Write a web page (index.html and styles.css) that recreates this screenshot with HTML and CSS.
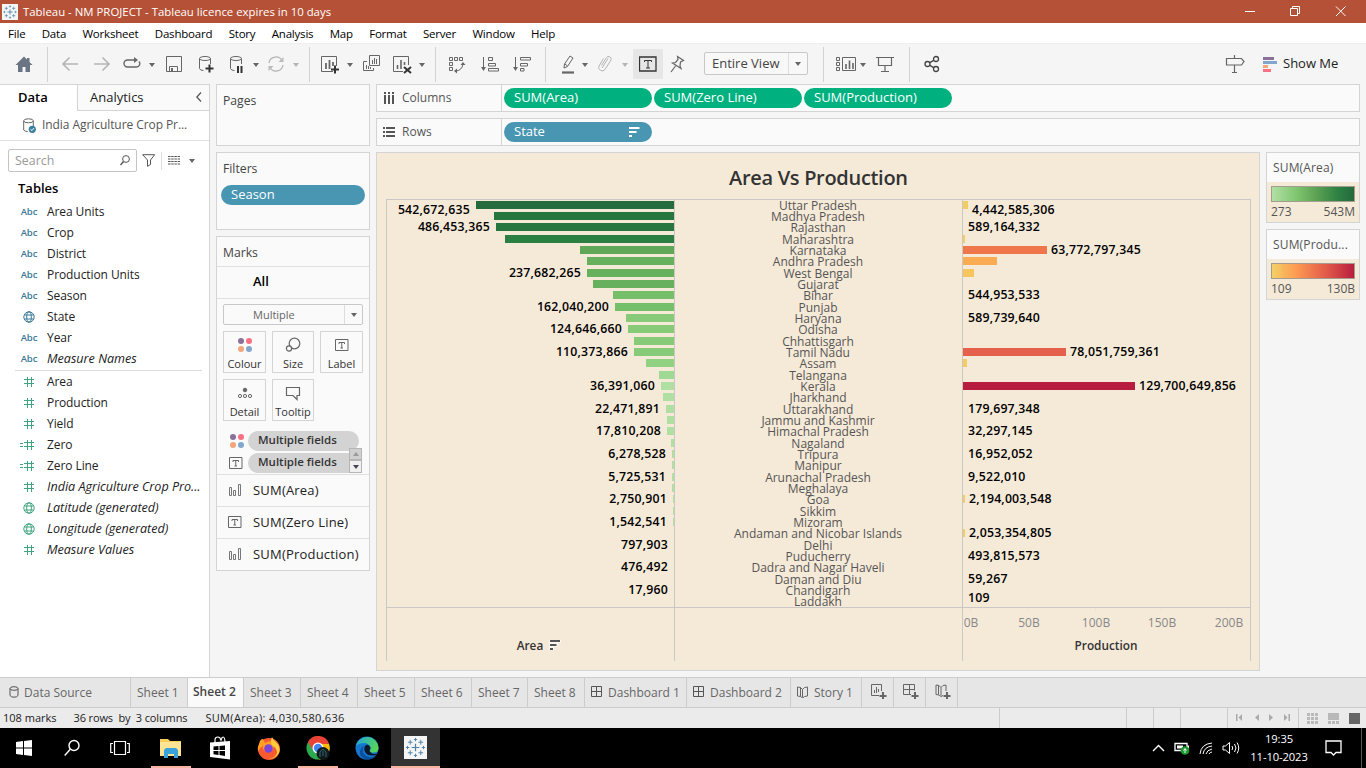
FILE: index.html
```html
<!DOCTYPE html>
<html lang="en">
<head>
<meta charset="utf-8">
<title>Tableau - NM PROJECT</title>
<link rel="stylesheet" href="styles.css">
</head>
<body>
<svg class="defs" width="0" height="0">
  <defs>
    <symbol id="hash" viewBox="0 0 16 13"><path d="M3 4.500h10M3 8.500h10M6.500 2v10M10.500 2v10" fill="none" stroke="#3fa47f"/></symbol>
    <symbol id="eqhash" viewBox="0 0 18 13"><path d="M4 4.500h10M4 8.500h10M7.500 2v10M11.500 2v10M0 5.500h3M0 8.500h3" fill="none" stroke="#3fa47f"/></symbol>
    <symbol id="globe" viewBox="0 0 12 12"><g fill="none" stroke="currentColor"><circle cx="6" cy="6" r="5.200"/><ellipse cx="6" cy="6" rx="2.300" ry="5.200"/><path d="M1.500 4h9M1.500 8h9"/></g></symbol>
    <symbol id="dots" viewBox="0 0 16 16"><circle cx="4" cy="4" r="3" fill="#8b7099"/><circle cx="12" cy="4" r="3" fill="#fb7082"/><circle cx="4" cy="12" r="3" fill="#f4a67c"/><circle cx="12" cy="12" r="3" fill="#82a6cd"/></symbol>
    <symbol id="tbox" viewBox="0 0 14 14"><path d="M.500 1.500h12.500v11H.500zM4 6V4.500h5.500V6M6.750 4.500v5.500M5.500 10h2.500" fill="none" stroke="#666"/></symbol>
    <symbol id="bars" viewBox="0 0 14 14"><path d="M1.500 4.500h2v8h-2zM5.500 7.500h2v5h-2zM10.500 1.500h2v11h-2z" fill="none" stroke="#777"/></symbol>
    <symbol id="grid" viewBox="0 0 12 12"><path d="M.500.500h10v10H.500zM5.500.500v10M.500 5.500h10" fill="none" stroke="#555"/></symbol>
    <symbol id="book" viewBox="0 0 12 12"><path d="M.500 1l3 .500L5.500 3.500l2-2 3-.500v9l-3 .500-2 1.500-2-1.500-3-.500zM3.500 1.500v9M5.500 3.500v8" fill="none" stroke="#666"/></symbol>
    <symbol id="caret" viewBox="0 0 8 4"><path d="M1 0h6L4 4z" fill="#666"/></symbol>
    <symbol id="logo" viewBox="0 0 24 24"><path fill="#f5f5f5" d="M0 0h24v24H0z"/><g fill="none" stroke="#4d83a8" stroke-width="1.300"><path d="M12 8v8M8 12h8"/><path d="M6.500 4v5M4 6.500h5M17.500 4v5M15 6.500h5M6.500 15v5M4 17.500h5M17.500 15v5M15 17.500h5M12 2v3.500M10.300 3.700h3.400M12 18.500V22M10.300 20.300h3.400M2 12h3.500M3.700 10.300v3.400M18.500 12H22M20.300 10.300v3.400" stroke-width="1"/></g></symbol>
    <linearGradient id="gg"><stop offset="0" stop-color="#b3e0a6"/><stop offset=".3" stop-color="#80c670"/><stop offset=".55" stop-color="#5ba053"/><stop offset=".8" stop-color="#2d8143"/><stop offset="1" stop-color="#24693d"/></linearGradient>
    <linearGradient id="gr"><stop offset="0" stop-color="#f4d166"/><stop offset=".3" stop-color="#fd9a51"/><stop offset=".65" stop-color="#e35c4a"/><stop offset="1" stop-color="#b71d3e"/></linearGradient>
  </defs>
</svg>
<header class="titlebar">
  <svg class="app-logo" width="16" height="16"><use href="#logo"/></svg>
  <span>Tableau - NM PROJECT - Tableau licence expires in 10 days</span>
  <svg class="winbtns" width="110" height="22" fill="none" stroke="#fff"><path d="M5 10.500h10M50.500 7.500h7v7h-7zM52.500 7v-1.500h7v7H58M96 5.500l9.500 9.500M105.500 5.500L96 15"/></svg>
</header>
<nav class="menubar"><span>File</span><span>Data</span><span>Worksheet</span><span>Dashboard</span><span>Story</span><span>Analysis</span><span>Map</span><span>Format</span><span>Server</span><span>Window</span><span>Help</span></nav>

<div class="toolbar">
  <svg class="ic m14" viewBox="0 0 20 20"><path d="M10 2.500L1.500 11H4v7h4.500v-5h3v5H16v-7h2.500L15.500 8V4h-2.500v1.500z" fill="#6a7584" stroke="none"/></svg>
  <i class="sep m13"></i>
  <svg class="ic m12 dim" viewBox="0 0 20 20"><path d="M18 10H3M9.500 3.500L3 10l6.500 6.500" stroke-width="1.600"/></svg>
  <svg class="ic m12 dim" viewBox="0 0 20 20"><path d="M2 10h15M10.500 3.500L17 10l-6.500 6.500" stroke-width="1.600"/></svg>
  <svg class="ic m10" viewBox="0 0 20 20"><path d="M13 6H5.500a3.500 3.500 0 0 0 0 7h9a3.300 3.300 0 0 0 2.500-5.500" stroke-width="1.400"/><path d="M12 3l4 3-4 3z" fill="#666" stroke="none"/></svg>
  <svg class="ca m6"><use href="#caret"/></svg>
  <svg class="ic m8" viewBox="0 0 20 20"><path d="M2.500 2.500h15v15h-15zM5.500 17v-4.500h8V17"/><path d="M7 14h2v3H7z" fill="#666" stroke="none"/></svg>
  <svg class="ic m12" viewBox="0 0 20 20"><ellipse cx="9" cy="4.500" rx="5.500" ry="2"/><path d="M3.500 4.500v10q.5 2 4 2M14.500 4.500V10"/><path d="M13.500 10.500v8M9.500 14.500h8" stroke="#333" stroke-width="2"/></svg>
  <svg class="ic m11" viewBox="0 0 20 20"><ellipse cx="9" cy="4.500" rx="5.500" ry="2"/><path d="M3.500 4.500v10q.5 2 4 2M14.500 4.500V10"/><path d="M11 12v7M14.500 12v7" stroke="#333" stroke-width="2"/></svg>
  <svg class="ca m5"><use href="#caret"/></svg>
  <svg class="ic m6 dim" viewBox="0 0 20 20"><path d="M3 9a7 7 0 0 1 13-2.500M17 11a7 7 0 0 1-13 2.500" stroke-width="1.300"/><path d="M17.500 3v5h-5zM2.500 17v-5h5z" fill="#bbb" stroke="none"/></svg>
  <svg class="ca m6 faint"><use href="#caret"/></svg>
  <i class="sep m9"></i>
  <svg class="ic m10" viewBox="0 0 20 20"><path d="M13 17.500H1.500v-15h15V12"/><path d="M6 9v6M9.500 6v9M13 8v4" stroke-width="1.800"/><path d="M15 11.500v8M11 15.500h8" stroke="#333" stroke-width="2"/></svg>
  <svg class="ca m6"><use href="#caret"/></svg>
  <svg class="ic m7" viewBox="0 0 20 20"><path d="M8.500 1.500h10v10h-10zM6 7.500H2.500v9h10V14"/><path d="M11.500 6v4M13.500 4v6M15.500 5v5M5.500 11v4M7.500 12v3M9.500 13v2"/></svg>
  <svg class="ic m11" viewBox="0 0 20 20"><path d="M11 17.500H1.500v-15h15V11"/><path d="M5.500 11v4M9 6v9M12.500 8v3" stroke-width="1.600"/><path d="M12 13l7 6M19 13l-7 6" stroke="#333" stroke-width="2"/></svg>
  <svg class="ca m6"><use href="#caret"/></svg>
  <i class="sep m9"></i>
  <svg class="ic m11" viewBox="0 0 20 20"><path d="M2.500 3.500h3v3h-3zM7.500 3.500h3v3h-3zM12.500 3.500h3v3h-3zM2.500 8.500h3v3h-3zM2.500 13.500h3v3h-3zM8 17q7 0 8-7"/><path d="M13.500 11l2.500-3 2.500 3zM10 14.500L7 17l3 2.500z" fill="#666" stroke="none"/></svg>
  <svg class="ic m13" viewBox="0 0 20 20"><path d="M3.500 3v12M8.500 3.500h4v3h-4zM8.500 9.500h7v2.500h-7zM8.500 14.500h10v2.500h-10z"/><path d="M1 13h5l-2.500 4z" fill="#666" stroke="none"/></svg>
  <svg class="ic m12" viewBox="0 0 20 20"><path d="M3.500 3v12M8.500 3.500h10v2.500h-10zM8.500 9.500h7v2.500h-7zM8.500 14.500h3.500v2.500h-3.500z"/><path d="M1 13h5l-2.500 4z" fill="#666" stroke="none"/></svg>
  <i class="sep m13"></i>
  <svg class="ic m12" viewBox="0 0 20 20"><path d="M6 14l.500-4L12 2l3 2-5.500 8.500zM7 10l2.500 2"/><path d="M4 18.500h12" stroke-width="2.200"/></svg>
  <svg class="ca m3"><use href="#caret"/></svg>
  <svg class="ic m6 dim" viewBox="0 0 20 20"><path d="M6.500 11.500l5-8a2.600 2.600 0 0 1 4.500 2.500l-6 9.500a3.500 3.500 0 0 1-6-3.500l4.500-7.500M7 14l6-9.500"/></svg>
  <svg class="ca m6 faint"><use href="#caret"/></svg>
  <span class="tbtn m4"><svg width="18" height="16" fill="none" stroke="#333"><path d="M.500 1h16.500v14H.500z" stroke-width="1.300"/><path d="M5.500 6V4.500h7V6M9 4.500v7.500M7 12h4"/></svg></span>
  <svg class="ic m4" viewBox="0 0 20 20"><path d="M10.500 2.500l6 4-3 1.500-.500 4 1 2.500-8.500-5.500 3-.500 2.500-3zM8.500 12L4 18" stroke-width="1.200"/></svg>
  <span class="fitsel m17"><span>Entire View</span><b><svg width="8" height="4"><use href="#caret"/></svg></b></span>
  <i class="sep m15"></i>
  <svg class="ic m12" viewBox="0 0 20 20"><path d="M.500 3.500h3v3h-3zM.500 8.500h3v3h-3zM.500 13.500h3v3h-3zM6.500 3.500h13v13h-13z"/><path d="M10 10v5M13.500 6.500V15M17 9v6" stroke-width="1.600"/></svg>
  <svg class="ca m3"><use href="#caret"/></svg>
  <svg class="ic m8" viewBox="0 0 20 20"><path d="M1 3.500h18M3.500 4v7.500h13V4M10 11.500V17M6 17.500h8" stroke-width="1.200"/></svg>
  <i class="sep m14"></i>
  <svg class="ic m12" viewBox="0 0 20 20"><g stroke="#444" stroke-width="1.300"><circle cx="5.500" cy="10" r="2.500"/><circle cx="14" cy="5" r="2.500"/><circle cx="14" cy="15" r="2.500"/><path d="M7.800 8.600L11.700 6.400M7.800 11.400l3.900 2.200"/></g></svg>
  <svg class="ic push" viewBox="0 0 20 20"><path d="M1.500 4.500h15l2.500 3-2.500 3.500h-15zM9.500 1v3.500M9.500 11v7M7 18.500h5" stroke-width="1.200"/></svg>
  <svg class="m18" width="14" height="20"><path d="M0 2h11v3H0z" fill="#8b7099"/><path d="M0 6h14v3H0z" fill="#82a6cd"/><path d="M0 10h5v3H0z" fill="#f4a67c"/><path d="M0 14h8v3H0z" fill="#fb7082"/></svg>
  <span class="showme">Show Me</span>
</div>

<main class="work">
  <aside class="datapane">
    <div class="dtabs"><b>Data</b><span>Analytics</span><svg width="6" height="10"><path d="M5 .500L.800 5 5 9.500" fill="none" stroke="#555" stroke-width="1.200"/></svg></div>
    <div class="source"><svg width="13" height="15" fill="none" stroke="#666"><ellipse cx="5.500" cy="2.800" rx="4.800" ry="2"/><path d="M.700 3v9q1 1.500 4 1.500M10.300 3v5"/><circle cx="9.300" cy="11.300" r="3.600" fill="#3b7f9e" stroke="none"/><path d="M7.500 11.300l1.500 1.300 2-2.500" stroke="#fff"/></svg><span>India Agriculture Crop Pr...</span></div>
    <div class="searchrow">
      <div class="search"><span>Search</span><svg width="10" height="11" fill="none" stroke="#555"><circle cx="6" cy="4" r="3.400"/><path d="M3.500 6.500L.500 10" stroke-width="1.400"/></svg></div>
      <svg class="funnel" width="14" height="13"><path d="M.700.700h12L8.500 6v4.500L5.500 12.300V6z" fill="none" stroke="#555"/></svg>
      <i></i>
      <svg width="12" height="11"><path d="M0 1.500h12M0 4h12M0 6.500h12M0 9h12" stroke="#555" stroke-width="1.200" stroke-dasharray="2.500 .7"/></svg>
      <svg class="dcar" width="8" height="4"><use href="#caret"/></svg>
    </div>
    <h2>Tables</h2>
    <ul class="fields">
      <li><em>Abc</em><span>Area Units</span></li>
      <li><em>Abc</em><span>Crop</span></li>
      <li><em>Abc</em><span>District</span></li>
      <li><em>Abc</em><span>Production Units</span></li>
      <li><em>Abc</em><span>Season</span></li>
      <li><em><svg width="12" height="12"><use href="#globe"/></svg></em><span>State</span></li>
      <li><em>Abc</em><span>Year</span></li>
      <li><em>Abc</em><span class="it">Measure Names</span></li>
    </ul>
    <ul class="fields meas">
      <li><em><svg width="16" height="13"><use href="#hash"/></svg></em><span>Area</span></li>
      <li><em><svg width="16" height="13"><use href="#hash"/></svg></em><span>Production</span></li>
      <li><em><svg width="16" height="13"><use href="#hash"/></svg></em><span>Yield</span></li>
      <li><em><svg width="18" height="13"><use href="#eqhash"/></svg></em><span>Zero</span></li>
      <li><em><svg width="18" height="13"><use href="#eqhash"/></svg></em><span>Zero Line</span></li>
      <li><em><svg width="16" height="13"><use href="#hash"/></svg></em><span class="it">India Agriculture Crop Pro...</span></li>
      <li><em><svg width="12" height="12"><use href="#globe"/></svg></em><span class="it">Latitude (generated)</span></li>
      <li><em><svg width="12" height="12"><use href="#globe"/></svg></em><span class="it">Longitude (generated)</span></li>
      <li><em><svg width="16" height="13"><use href="#hash"/></svg></em><span class="it">Measure Values</span></li>
    </ul>
  </aside>

  <section class="cards">
    <div class="card pages"><h3>Pages</h3></div>
    <div class="card filters"><h3>Filters</h3><div class="pill blue"><span>Season</span></div></div>
    <div class="card marks">
      <h3>Marks</h3>
      <div class="all"><span>All</span></div>
      <div class="mtype"><span>Multiple</span><b><svg width="8" height="4"><use href="#caret"/></svg></b></div>
      <div class="mbtns">
        <div><svg width="16" height="16"><use href="#dots"/></svg><span>Colour</span></div>
        <div><svg width="16" height="16" fill="none" stroke="#666" stroke-width="1.200"><circle cx="9.500" cy="6.500" r="5.300"/><circle cx="4" cy="11.500" r="2.600" fill="#fafafa"/></svg><span>Size</span></div>
        <div><svg width="14" height="16" viewBox="0 -1 14 16"><use href="#tbox" width="14" height="14"/></svg><span>Label</span></div>
        <div><svg width="16" height="16" fill="none" stroke="#666"><circle cx="8" cy="5" r="1.800" fill="#666"/><circle cx="3" cy="11" r="1.600"/><circle cx="8" cy="11" r="1.600"/><circle cx="13" cy="11" r="1.600"/></svg><span>Detail</span></div>
        <div><svg width="16" height="16" fill="none" stroke="#666" stroke-width="1.200"><path d="M1.500 2.500h13v8H12v4l-4-4H1.500z"/></svg><span>Tooltip</span></div>
      </div>
      <div class="mf"><svg width="16" height="16"><use href="#dots"/></svg><span>Multiple fields</span></div>
      <div class="mf two"><svg width="14" height="14"><use href="#tbox"/></svg><span>Multiple fields</span>
        <div class="spin"><i><svg width="8" height="4"><path d="M1 4h6L4 0z" fill="#999"/></svg></i><i><svg width="8" height="4"><path d="M1 0h6L4 4z" fill="#445"/></svg></i></div>
      </div>
      <div class="sum"><svg width="14" height="14"><use href="#bars"/></svg><span>SUM(Area)</span></div>
      <div class="sum"><svg width="14" height="14"><use href="#tbox"/></svg><span>SUM(Zero Line)</span></div>
      <div class="sum"><svg width="14" height="14"><use href="#bars"/></svg><span>SUM(Production)</span></div>
    </div>
  </section>

  <section class="right">
    <div class="shelf"><div class="sh"><svg width="13" height="14"><path d="M1 1h2v2H1zM5 1h2v2H5zM9 1h2v2H9zM1 4h2v9H1zM5 4h2v9H5zM9 4h2v9H9z" fill="#555"/></svg><span>Columns</span></div>
      <div class="pill green"><span>SUM(Area)</span></div><div class="pill green"><span>SUM(Zero Line)</span></div><div class="pill green"><span>SUM(Production)</span></div></div>
    <div class="shelf"><div class="sh"><svg width="13" height="12"><path d="M0 2h2M3 2h9M0 6h2M3 6h9M0 10h2M3 10h9" stroke="#555" stroke-width="2"/></svg><span>Rows</span></div>
      <div class="pill blue"><span>State</span><svg width="13" height="10"><path d="M0 1h10.500M0 5h7.500M0 9h3" stroke="#fff" stroke-width="2"/></svg></div></div>
    <div class="lower">
      <div class="viz"><svg id="chart" width="882" height="517" viewBox="377 153 882 517"></svg></div>
      <div class="legends">
        <div class="legend"><h4>SUM(Area)</h4><div class="lg"><svg width="84" height="16"><rect x=".5" y=".5" width="83" height="15" fill="url(#gg)" stroke="#a49c8e"/></svg><p><span>273</span><span>543M</span></p></div></div>
        <div class="legend"><h4>SUM(Produ...</h4><div class="lg"><svg width="84" height="16"><rect x=".5" y=".5" width="83" height="15" fill="url(#gr)" stroke="#a49c8e"/></svg><p><span>109</span><span>130B</span></p></div></div>
      </div>
    </div>
  </section>
</main>

<footer class="tabs">
  <div class="w130"><svg width="10" height="12" fill="none" stroke="#555"><ellipse cx="5" cy="2.500" rx="4" ry="1.800"/><path d="M1 2.500v7q1 1.700 4 1.700t4-1.700v-7"/></svg><span>Data Source</span></div>
  <div class="w57"><span>Sheet 1</span></div><div class="w56 on"><span>Sheet 2</span></div><div class="w57"><span>Sheet 3</span></div><div class="w57"><span>Sheet 4</span></div><div class="w57"><span>Sheet 5</span></div><div class="w57"><span>Sheet 6</span></div><div class="w56"><span>Sheet 7</span></div><div class="w57"><span>Sheet 8</span></div>
  <div class="w102"><svg width="12" height="12"><use href="#grid"/></svg><span>Dashboard 1</span></div>
  <div class="w104"><svg width="12" height="12"><use href="#grid"/></svg><span>Dashboard 2</span></div>
  <div class="w71"><svg width="12" height="12"><use href="#book"/></svg><span>Story 1</span></div>
  <div class="w32"><svg width="16" height="16" fill="none" stroke="#666"><path d="M8 11.500H.500v-11h10V7M3.500 6v3M5.500 3v6M7.500 5v3"/><path d="M12 8v7M8.500 12h7" stroke-width="2"/></svg></div>
  <div class="w32"><svg width="16" height="16" fill="none" stroke="#666"><path d="M8 10.500H.500V.500h11v6M6.500.500v10M.500 5.500h11"/><path d="M12 8v7M8.500 12h7" stroke-width="2"/></svg></div>
  <div class="w32"><svg width="16" height="16" fill="none" stroke="#666"><path d="M8 11.500l-2 1-2-1.500-3-.500V1l3 .500 2 2 2-2 3-.500v6M3.500 1.500v9M6 3.500v8"/><path d="M12 8v7M8.500 12h7" stroke-width="2"/></svg></div>
</footer>
<div class="status"><span>108 marks</span><span class="rc">36 rows&nbsp; by&nbsp; 3 columns</span><span class="total">SUM(Area): 4,030,580,636</span>
  <div class="sgrid"><i></i><i></i><i></i><i></i>
    <i><svg width="58" height="10" fill="#aaa"><path d="M2 1h1.500v7H2zM8 1v7L4.500 4.500zM25 1v7l-4-3.500zM35 1v7l4-3.500zM50 1v7l3.500-3.500zM54.500 1H56v7h-1.500z"/></svg></i>
    <i><svg width="54" height="11"><path d="M0 0h3v3H0zM4 0h3v3H4zM8 0h3v3H8zM0 4h3v3H0zM4 4h3v3H4zM8 4h3v3H8zM0 8h3v3H0zM4 8h3v3H4zM8 8h3v3H8zM21 0h11v7H21zM21 8h3v3h-3zM25 8h3v3h-3zM29 8h3v3h-3z" fill="#b9b9b9"/><path d="M42 0h11v11H42z" fill="#666"/></svg></i>
  </div>
</div>
<div class="taskbar">
  <div><svg width="16" height="16" fill="#fff"><path d="M0 2l7-1v6.500H0zM8 .900L16 0v7.500H8zM0 8.500h7V15L0 14zM8 8.500h8V16l-8-1z"/></svg></div>
  <div><svg width="18" height="18" fill="none" stroke="#fff" stroke-width="1.400"><circle cx="10" cy="6.500" r="5"/><path d="M6.500 10L.700 16.500"/></svg></div>
  <div><svg width="24" height="16" fill="none" stroke="#fff" stroke-width="1.200"><path d="M4.500 1.500h11v13h-11zM3 3.500H.700v9H3M17 3.500h2.300v9H17"/></svg></div>
  <div class="exp"><svg width="22" height="20"><path d="M0 1h8l2 2h11v15H0z" fill="#f5ce5c"/><path d="M0 4h21v14H0z" fill="#fde494"/><path d="M4 18v-6l2-2h10l2 2v8h-4v-4H8v4H4z" fill="#3ba3dc"/></svg></div>
  <div><svg width="22" height="24"><path d="M6 7V4q0-3 3-3 2 0 3 3 1-3 2-3 2 0 2 6" fill="none" stroke="#fff" stroke-width="1.200"/><path d="M1 6.500L21 5v18.500L1 21z" fill="#fff"/><path d="M4.500 10.500l5-.500v4h-5zM10.500 10l5.500-.500v4.500h-5.500zM4.500 15h5v4l-5-.700zM10.500 15H16v5l-5.500-.900z" fill="#000"/></svg></div>
  <div><svg width="24" height="24"><circle cx="12" cy="13" r="11" fill="#fb5a2e"/><path d="M2 8Q3 3 6 3l2 4q4-3 7-1 3 3 1 7-2 4-6 3-5-2-4-6-4 2-5 6Q0 12 2 8" fill="#ffa024"/><path d="M15 1q1 3 4 5 5 5 3 11-4 6-10 6 6-1 8-6 0-5-5-8-2-4 0-8" fill="#ffce3a"/><circle cx="11.500" cy="12.500" r="4.300" fill="#7a45d8"/></svg></div>
  <div class="chr"><svg width="24" height="24"><circle cx="12" cy="12" r="11.500" fill="#2da94f"/><path d="M2 6A11.500 11.500 0 0 1 23 8H12L7 14z" fill="#ea4335"/><path d="M12 8h11a11.500 11.500 0 0 1-10 15.500l4-9z" fill="#fbbc05"/><circle cx="12" cy="12" r="5.500" fill="#fff"/><circle cx="12" cy="12" r="4.200" fill="#4285f4"/><circle cx="17" cy="17.500" r="6.500" fill="#10191c"/><path d="M14 21v-5q3-5 6 0v5M17 15v5" fill="none" stroke="#356970"/></svg></div>
  <div><svg width="24" height="24"><defs><linearGradient id="eg" x1="0" y1="0" x2="1" y2=".3"><stop offset="0" stop-color="#21a5e3"/><stop offset="1" stop-color="#55d35c"/></linearGradient></defs><circle cx="12" cy="12" r="11.500" fill="#1478cf"/><path d="M.800 10A11.500 11.500 0 0 1 23.500 12q0 4.500-5 4.500-4 0-4-2 1-1 1-3Q14 7 9 7 4 7 .800 10" fill="url(#eg)"/><path d="M9 10q-3 5 1 9t11 .500q-4 5-11 3.500-6-3-5-8 1-4 4-5" fill="#0c4f9e"/><path d="M14.500 14.500q1-1 1-3Q14 8 11 9q-3 3-1 7 3 5 11 3l1-1.500q-6 1.500-7.500-3" fill="#0a1a2c"/></svg></div>
  <div class="tab"><svg width="23" height="23"><use href="#logo"/></svg></div>
  <div class="tray">
    <svg width="13" height="8" fill="none" stroke="#fff" stroke-width="1.400"><path d="M1 7l5.500-5.500L12 7"/></svg>
    <svg width="16" height="14"><path d="M1 2.500h12v7H1z" fill="none" stroke="#fff" stroke-width="1.300"/><path d="M3 4.500h6v3H3zM13.500 4.500h1.500v3h-1.500z" fill="#fff"/><circle cx="11" cy="9.500" r="4.300" fill="#189a2f"/><path d="M11 12V8M9.500 9.500L11 7.500l1.500 2" stroke="#fff" fill="none"/></svg>
    <svg width="14" height="14" fill="none" stroke="#fff"><path d="M1 13Q2 3 13 2M4 13q1-7 9-8M7 13q1-4 6-5M10 13q1-2 3-2"/></svg>
    <svg width="18" height="14" fill="none" stroke="#fff"><path d="M1 5h2.500l4-3.500v11L3.500 9H1zM10 5q1.500 2 0 4M12.500 3q3 4 0 8M15 1.500q3.500 5.500 0 11"/></svg>
    <p><span>19:35</span><span>11-10-2023</span></p>
    <svg class="note" width="17" height="17" fill="none" stroke="#fff" stroke-width="1.300"><path d="M1 1h15v11.500H11L8.500 15 6 12.500H1z"/></svg>
    <u></u>
  </div>
</div>
<script src="chart.js"></script>
</body>
</html>
```
FILE: chart.js
```js
// State, left edge of the area bar, area label, right edge of the production bar, production label
const rows = [
  ["Uttar Pradesh", 476, "542,672,635", 968, "4,442,585,306"],
  ["Madhya Pradesh", 494, "", 0, ""],
  ["Rajasthan", 496, "486,453,365", 0, "589,164,332"],
  ["Maharashtra", 505, "", 965, ""],
  ["Karnataka", 580, "", 1047, "63,772,797,345"],
  ["Andhra Pradesh", 587, "", 997, ""],
  ["West Bengal", 587, "237,682,265", 974, ""],
  ["Gujarat", 593, "", 0, ""],
  ["Bihar", 613, "", 0, "544,953,533"],
  ["Punjab", 615, "162,040,200", 0, ""],
  ["Haryana", 626, "", 0, "589,739,640"],
  ["Odisha", 628, "124,646,660", 0, ""],
  ["Chhattisgarh", 634, "", 0, ""],
  ["Tamil Nadu", 634, "110,373,866", 1066, "78,051,759,361"],
  ["Assam", 646, "", 967, ""],
  ["Telangana", 659, "", 0, ""],
  ["Kerala", 661, "36,391,060", 1135, "129,700,649,856"],
  ["Jharkhand", 663, "", 0, ""],
  ["Uttarakhand", 666, "22,471,891", 0, "179,697,348"],
  ["Jammu and Kashmir", 667, "", 0, ""],
  ["Himachal Pradesh", 667, "17,810,208", 0, "32,297,145"],
  ["Nagaland", 671, "", 0, ""],
  ["Tripura", 672, "6,278,528", 0, "16,952,052"],
  ["Manipur", 672, "", 0, ""],
  ["Arunachal Pradesh", 672, "5,725,531", 0, "9,522,010"],
  ["Meghalaya", 672, "", 0, ""],
  ["Goa", 673, "2,750,901", 965, "2,194,003,548"],
  ["Sikkim", 673, "", 0, ""],
  ["Mizoram", 673, "1,542,541", 0, ""],
  ["Andaman and Nicobar Islands", 674, "", 965, "2,053,354,805"],
  ["Delhi", 674, "797,903", 0, ""],
  ["Puducherry", 674, "", 0, "493,815,573"],
  ["Dadra and Nagar Haveli", 674, "476,492", 0, ""],
  ["Daman and Diu", 674, "", 0, "59,267"],
  ["Chandigarh", 674, "17,960", 0, ""],
  ["Laddakh", 674, "", 0, "109"]
];
const greens = [[674, "#b0dfa3"], [660, "#a0d993"], [646, "#91d282"], [634, "#87cb79"], [615, "#76bf6a"], [593, "#67b05e"], [580, "#60a857"], [505, "#2b7f42"], [496, "#27763f"], [476, "#256b3d"]];
const reds = { 1047: "#ef764a", 997: "#fcab55", 974: "#f6c55e", 1066: "#e5614b", 1135: "#b71d3e" };
const green = x => { let c = greens[0][1]; for (const [k, v] of greens) if (x <= k) c = v; return c; };
const textLen = s => s.replace(/,/g, "").length * 7.2 + (s.split(",").length - 1) * 3.5;

let out = `<text class="title" x="818.5" y="185" text-anchor="middle" textLength="179">Area Vs Production</text>`;
rows.forEach(([name, ax, al, px, pl], i) => {
  const y = Math.floor(201.01 + i * 34 / 3);
  if (ax < 674) out += `<rect x="${ax}" y="${y}" width="${674 - ax}" height="8" fill="${green(ax)}"/>`;
  if (px) out += `<rect x="963" y="${y}" width="${px - 963}" height="8" fill="${reds[px] || "#f3cc63"}"/>`;
  out += `<text class="st" x="818" y="${y + 9}" text-anchor="middle">${name}</text>`;
  const dy = i === 0 ? 13 : i === 35 ? 5 : 8;
  if (al) out += `<text class="num" x="${Math.min(ax - 6.3, 667.8) - textLen(al)}" y="${y + dy}" textLength="${textLen(al)}">${al}</text>`;
  if (pl) out += `<text class="num" x="${px ? px + 4 : 968}" y="${y + dy}" textLength="${textLen(pl)}">${pl}</text>`;
});
out += `<path d="M386 199.5H1251M386 607.5H1251M386.500 199V661M674.500 199V661M962.500 199V661M1250.500 199V661" stroke="#c9c8c6" fill="none"/>`;
[["0B", 971], ["50B", 1029], ["100B", 1096], ["150B", 1162], ["200B", 1229]].forEach(([t, x]) => {
  out += `<text class="tick" x="${x}" y="627" text-anchor="middle">${t}</text>`;
  out += `<path d="M${x - .5} 608v4" stroke="#efe3d1"/>`;
});
out += `<text class="axis" x="530" y="650" text-anchor="middle">Area</text><text class="axis" x="1106" y="650" text-anchor="middle">Production</text>`;
out += `<path d="M549 640h12v3h-2.500v2H557v2h-3v3h-5z" fill="#fff" opacity=".6"/><path d="M550 641h10M550 645h6.500M550 649h3" stroke="#555" stroke-width="2"/>`;
document.getElementById("chart").innerHTML = out;
```
FILE: styles.css
```css
* { box-sizing: border-box; }
body { margin: 0; width: 1366px; height: 768px; overflow: hidden; display: flex; flex-direction: column; background: #f5f5f5; font: 13px/16px "Open Sans", "Noto Sans", sans-serif; color: #333; white-space: nowrap; }
h2, h3, h4, p, ul { margin: 0; padding: 0; font-weight: 400; font-size: inherit; }
svg { display: block; flex: none; }
.defs { position: absolute; }

.titlebar { height: 23px; flex: none; background: #b55136; color: #fff; display: flex; align-items: center; padding-left: 2px; font-size: 11.4px; }
.app-logo { margin-right: 5px; }
.winbtns { margin-left: auto; margin-right: 16px; }
.menubar { height: 20px; flex: none; background: #fff; color: #000; display: flex; align-items: center; gap: 16.3px; padding: 2px 0 0 8px; font-size: 11.5px; letter-spacing: -.2px; }

.toolbar { height: 41px; flex: none; display: flex; align-items: flex-start; padding-top: 11px; border-top: 1px solid #eee; }
.toolbar > * { flex: none; }
.ic { width: 20px; height: 20px; fill: none; stroke: #666; margin-top: -1px; }
.dim { stroke: #b5b5b5; }
.ca { width: 8px; height: 4px; margin-top: 8px; }
.faint { opacity: .45; }
.sep { width: 1px; height: 35px; background: #d2d2d2; margin-top: -8px; }
.m3 { margin-left: 3px; } .m4 { margin-left: 4px; } .m5 { margin-left: 5px; } .m6 { margin-left: 6px; } .m7 { margin-left: 7px; } .m8 { margin-left: 8px; } .m9 { margin-left: 9px; } .m10 { margin-left: 10px; } .m11 { margin-left: 11px; } .m12 { margin-left: 12px; } .m13 { margin-left: 13px; } .m14 { margin-left: 14px; } .m15 { margin-left: 15px; } .m17 { margin-left: 17px; } .m18 { margin-left: 18px; }
.push { margin-left: auto; }
.tbtn { width: 30px; height: 30px; margin-top: -6px; background: #e6e6e6; display: flex; align-items: center; justify-content: center; }
.fitsel { width: 104px; height: 23px; margin-top: -3px; border: 1px solid #c8c8c8; border-radius: 2px; background: #f8f8f8; display: flex; align-items: center; padding-left: 7px; color: #444; }
.fitsel span { margin-top: -2px; }
.fitsel b { margin-left: auto; width: 19px; height: 21px; border-left: 1px solid #ddd; display: flex; align-items: center; justify-content: center; }
.showme { color: #222; margin: 0 28px 0 6px; width: 55px; }

.work { height: 593px; flex: none; display: flex; }
.datapane { width: 210px; background: #fff; border: 1px solid #d4d4d4; border-width: 1px 1px 0 0; }
.dtabs { height: 26px; display: flex; }
.dtabs b { width: 77px; padding: 4px 0 0 18px; color: #000; font-weight: 600; }
.dtabs span { width: 118px; padding: 4px 0 0 12px; border-left: 1px solid #d4d4d4; border-bottom: 1px solid #d4d4d4; background: #fafafa; color: #222; }
.dtabs svg { box-sizing: content-box; padding: 7px 7px 8px 1px; border-bottom: 1px solid #d4d4d4; background: #fafafa; }
.source { height: 30px; border-bottom: 1px solid #e0e0e0; display: flex; align-items: center; padding: 0 0 1px 23px; gap: 6px; color: #555; font-size: 12px; letter-spacing: -.07px; }
.searchrow { display: flex; align-items: center; padding: 8px 0 0 8px; height: 31px; }
.search { width: 129px; height: 23px; border: 1px solid #c4c4c4; border-radius: 2px; display: flex; align-items: center; justify-content: space-between; padding: 0 6px; color: #999; font-size: 12.4px; }
.funnel { margin-left: 5px; }
.searchrow i { width: 1px; height: 18px; background: #ddd; margin: 0 6px 0 5px; }
.dcar { margin-left: 8px; }
.datapane h2 { margin: 8px 0 5px 18px; font-weight: 600; color: #000; }
.fields { list-style: none; }
.fields li { height: 21px; display: flex; align-items: center; color: #222; font-size: 12px; letter-spacing: -.08px; }
.fields li span { padding-top: 1px; }
.fields em { flex: none; width: 26px; margin: 0 5px 0 16px; display: flex; justify-content: center; font: 600 9.5px/16px "Open Sans", sans-serif; color: #3b7a96; }
.meas { margin: 1px 7px 0 15px; border-top: 1px solid #dcdcdc; }
.meas em { margin-left: 1px; color: #3fa47f; }
.fields .it { font-style: italic; font-size: 12.6px; letter-spacing: 0; }
.meas .it { letter-spacing: -.02px; }

.cards { width: 154px; margin-left: 6px; display: flex; flex-direction: column; gap: 6px; }
.card { border: 1px solid #d4d4d4; background: #fafafa; }
.card h3 { padding: 8px 0 0 6px; color: #444; font-size: 12.2px; }
.pages { height: 62px; }
.filters { height: 78px; }
.marks { height: 335px; }
.pill { height: 20px; border-radius: 10px; color: #fff; display: flex; align-items: center; padding: 0 10px; }
.pill span { margin-top: -2px; }
.blue { background: #4996b2; }
.green { background: #00b180; }
.filters .pill { width: 144px; margin: 8px 0 0 4px; }
.marks h3 { height: 30px; border-bottom: 1px solid #e0e0e0; }
.all { height: 32px; border-bottom: 1px solid #e0e0e0; padding: 6px 0 0 36px; font-weight: 600; color: #000; }
.mtype { width: 140px; height: 21px; margin: 5px 0 0 6px; border: 1px solid #c8c8c8; border-radius: 2px; display: flex; align-items: center; color: #666; font-size: 11px; padding-left: 29px; }
.mtype b { margin-left: auto; width: 18px; height: 19px; border-left: 1px solid #ddd; display: flex; align-items: center; justify-content: center; }
.mbtns { display: grid; grid-template-columns: 43px 42px 43px; gap: 6px; padding: 6px 0 0 6px; }
.mbtns div { height: 42px; border: 1px solid #d4d4d4; display: flex; flex-direction: column; align-items: center; padding-top: 5px; gap: 3px; font-size: 11px; }
.mf { height: 23px; display: flex; align-items: center; padding-left: 12px; margin-top: 8px; }
.mf span { width: 111px; height: 20px; border-radius: 10px; background: #d3d3d3; padding: 1px 0 0 10px; margin-left: 3px; font-size: 11.5px; font-weight: 600; }
.mf.two { margin-top: 0; position: relative; height: 22px; }
.mf.two span { margin-left: 5px; }
.spin { position: absolute; right: 7px; top: -4px; width: 13px; height: 25px; }
.spin i { height: 12px; border: 1px solid #b5b5b5; background: #d0d0d0; display: flex; align-items: center; justify-content: center; }
.spin i + i { height: 13px; background: #f0f0f0; }
.sum { height: 32px; border-top: 1px solid #e0e0e0; display: flex; align-items: center; padding: 0 0 1px 11px; gap: 11px; color: #222; letter-spacing: .2px; }

.right { width: 984px; margin-left: 6px; display: flex; flex-direction: column; gap: 6px; }
.shelf { height: 28px; border: 1px solid #d4d4d4; background: #fafafa; display: flex; align-items: center; gap: 2px; }
.sh { width: 125px; height: 26px; border-right: 1px solid #d4d4d4; display: flex; align-items: center; padding-left: 6px; gap: 6px; color: #555; font-size: 12px; }
.shelf .pill { width: 148px; }
.pill svg { margin-left: auto; }
.lower { display: flex; gap: 6px; }
.viz { width: 884px; height: 519px; border: 1px solid #d4d4d4; background: #f5ead8; }
.legends { width: 94px; display: flex; flex-direction: column; gap: 6px; }
.legend { height: 71px; border: 1px solid #d4d4d4; background: #fafafa; }
.legend h4 { height: 29px; padding: 7px 0 0 6px; color: #555; font-size: 12px; letter-spacing: .15px; }
.lg { height: 40px; background: #f5ead8; padding: 4px; }
.lg p { display: flex; justify-content: space-between; color: #555; font-size: 12px; padding-top: 2px; }

.title { font: 600 20px "Open Sans", sans-serif; fill: #333; }
.st { font: 12px "Open Sans", sans-serif; fill: #555; }
.num { font: 600 12.3px "Open Sans", sans-serif; fill: #000; }
.tick { font: 12px "Open Sans", sans-serif; fill: #888; }
.axis { font: 600 11.8px "Open Sans", sans-serif; fill: #333; }

.tabs { height: 31px; flex: none; border: 1px solid #ccc; border-width: 1px 0; background: #e6e6e6; display: flex; font-size: 12px; color: #666; }
.tabs div { border-right: 1px solid #ccc; display: flex; align-items: center; padding-left: 6px; gap: 5px; }
.tabs svg { margin-bottom: 1px; }
.tabs .on { background: #fafafa; font-weight: 600; color: #444; padding: 0 0 2px 5px; }
.w130 { width: 131px; } .tabs .w130 { padding-left: 9px; } .w57 { width: 57px; } .w56 { width: 56px; } .w102 { width: 102px; } .w104 { width: 104px; } .w71 { width: 71px; } .w32 { width: 32px; } .tabs .w32 { padding-left: 9px; }
.status { height: 20px; flex: none; background: #ebebeb; display: flex; align-items: center; padding-left: 3px; font-size: 11px; color: #222; }
.rc { margin: 0 18px 0 17px; letter-spacing: -.13px; }
.total { letter-spacing: .33px; }
.sgrid { margin-left: auto; display: grid; grid-template-columns: 127px 27px 27px 47px 71px 68px; height: 20px; }
.sgrid i { border-left: 1px solid #ccc; display: flex; align-items: center; padding-left: 6px; }
.sgrid i:last-child { padding-left: 8px; }

.taskbar { height: 40px; flex: none; background: #000; display: flex; color: #fff; }
.taskbar > div { width: 48.9px; display: flex; align-items: center; justify-content: center; }
.exp, .chr { background: linear-gradient(#f7b5a0, #f7b5a0) center bottom / 40px 2px no-repeat; }
.taskbar .tab { background: #333; border-bottom: 2px solid #f7b5a0; }
.taskbar .tray { margin-left: auto; width: 214px; justify-content: flex-start; gap: 9px; }
.tray p { width: 60px; font-size: 11.2px; display: flex; flex-direction: column; align-items: center; line-height: 18px; letter-spacing: -.1px; }
.note { margin-left: 7px; }
.tray u { width: 1px; height: 40px; background: #555; margin-left: auto; margin-right: 4px; }
```
